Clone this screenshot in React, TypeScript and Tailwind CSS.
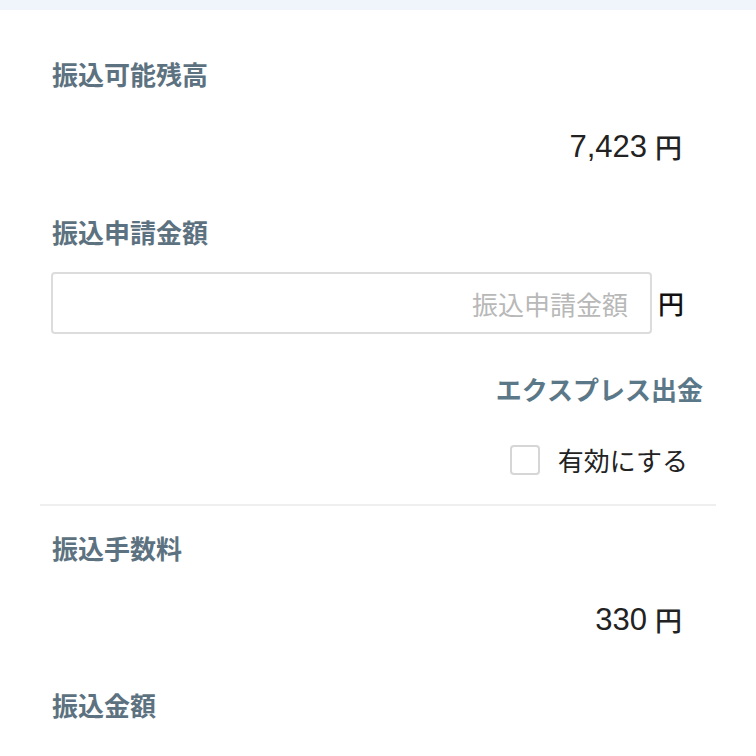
const labelCls =
  "text-[26px] leading-[36px] font-bold text-[#5d7280] [font-family:'Noto_Sans_CJK_JP',sans-serif]";

function Amount({ value, className = "" }: { value: string; className?: string }) {
  return (
    <div className={`flex items-center justify-end pr-[22px] h-[36px] text-[#222222] ${className}`}>
      <span className="text-[31px] leading-[36px] [font-family:'Liberation_Sans',sans-serif]">{value}</span>
      <span className="ml-[8px] text-[27px] leading-[36px] font-medium [font-family:'Noto_Sans_CJK_JP',sans-serif]">円</span>
    </div>
  );
}

export default function App() {
  return (
    <div className="w-[756px] h-[756px] overflow-hidden bg-white [font-family:'Noto_Sans_CJK_JP',sans-serif]">
      <div className="h-[10px] bg-[#eff5fb]" />
      <div className="px-[40px]">
        <div className="px-[12px]">
          <div className={`mt-[46px] ${labelCls}`}>振込可能残高</div>
          <Amount value="7,423" className="mt-[37px]" />

          <div className={`mt-[49px] ${labelCls}`}>振込申請金額</div>
          <div className="mt-[22px] flex items-center pr-[20px]">
            <input
              type="text"
              placeholder="振込申請金額"
              className="-ml-px flex-1 h-[62px] rounded-[4px] border-2 border-[#dcdcdc] bg-white pr-[22px] text-right text-[26px] text-[#222] outline-none placeholder:text-[#b8b8b8] [font-family:'Noto_Sans_CJK_JP',sans-serif]"
            />
            <span className="ml-[6px] text-[26px] leading-[36px] font-medium text-[#111]">円</span>
          </div>

          <div className="mt-[37px] pr-px text-right text-[26px] leading-[36px] font-bold text-[#5a7888]">
            エクスプレス出金
          </div>

          <label className="mt-[35px] flex items-center justify-end pr-[16px]">
            <span className="w-[30px] h-[30px] rounded-[4px] border-2 border-[#d6d6d6] bg-white" />
            <span className="ml-[18px] text-[26px] leading-[36px] text-[#222]">有効にする</span>
          </label>
        </div>

        <div className="mt-[26px] h-[2px] bg-[#efefef]" />

        <div className="px-[12px]">
          <div className={`mt-[24px] ${labelCls}`}>振込手数料</div>
          <Amount value="330" className="mt-[36px]" />
          <div className={`mt-[49px] ${labelCls}`}>振込金額</div>
        </div>
      </div>
    </div>
  );
}
